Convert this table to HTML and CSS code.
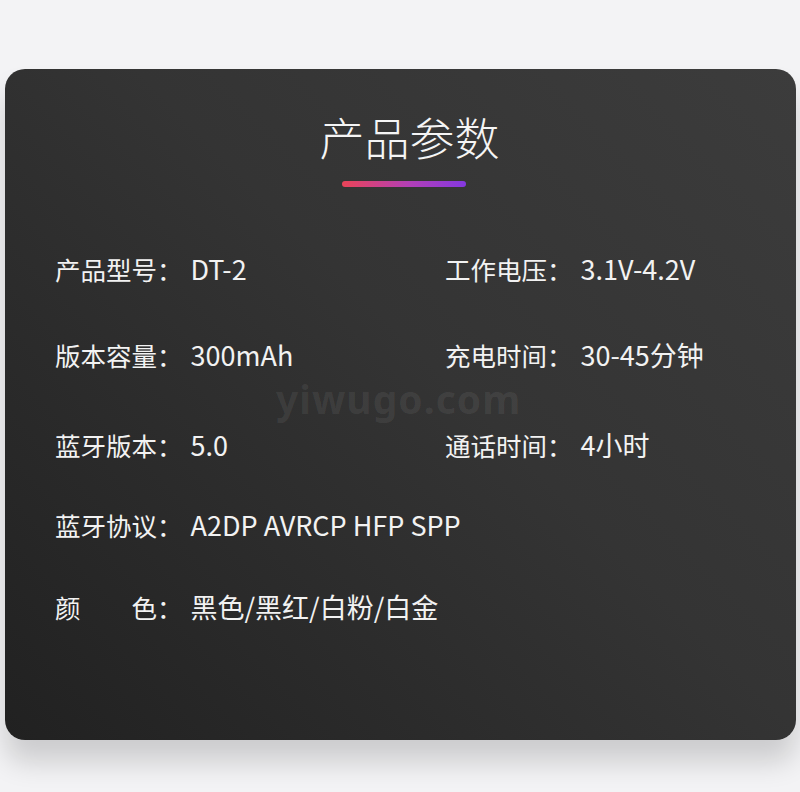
FILE: index.html
```html
<!DOCTYPE html>
<html lang="zh">
<head>
<meta charset="utf-8">
<link rel="stylesheet" href="styles.css">
</head>
<body>
<div class="page">
  <div class="card">
    <h1 class="title">产品参数</h1>
    <div class="bar"></div>
    <div class="specs">
      <div class="spec r1"><span class="label">产品型号：</span><span class="value">DT-2</span></div>
      <div class="spec r1"><span class="label">工作电压：</span><span class="value">3.1V-4.2V</span></div>
      <div class="spec r2"><span class="label">版本容量：</span><span class="value">300mAh</span></div>
      <div class="spec r2"><span class="label">充电时间：</span><span class="value">30-45分钟</span></div>
      <div class="spec r3"><span class="label">蓝牙版本：</span><span class="value">5.0</span></div>
      <div class="spec r3"><span class="label">通话时间：</span><span class="value">4小时</span></div>
      <div class="spec r4 wide"><span class="label">蓝牙协议：</span><span class="value">A2DP AVRCP HFP SPP</span></div>
      <div class="spec r5 wide"><span class="label">颜　　色：</span><span class="value">黑色/黑红/白粉/白金</span></div>
    </div>
    <div class="watermark">yiwugo.com</div>
  </div>
</div>
</body>
</html>
```
FILE: styles.css
```css
html, body {
  margin: 0;
  padding: 0;
  background: #f3f3f5;
}
.page {
  width: 800px;
  height: 792px;
  padding: 69px 4px 0 5px;
  box-sizing: border-box;
  font-family: "Noto Sans CJK SC", "Noto Sans", sans-serif;
}
.card {
  position: relative;
  height: 671px;
  border-radius: 20px;
  background: linear-gradient(45deg, #212121 0%, #343434 55%, #3c3c3c 100%);
  box-shadow: 0 22px 28px rgba(0, 0, 0, 0.16);
  color: #f2f2f2;
  padding-top: 38px;
  box-sizing: border-box;
}
.title {
  margin: 0;
  padding-left: 18px;
  text-align: center;
  font-size: 45px;
  font-weight: 300;
  line-height: 60px;
  color: #f5f5f5;
}
.bar {
  width: 124px;
  height: 6px;
  border-radius: 3px;
  margin: 14px 0 0 337px;
  background: linear-gradient(90deg, #ea4458 0%, #b23fb8 55%, #8438e0 100%);
}
.specs {
  display: grid;
  grid-template-columns: 390px 1fr;
  padding: 64px 0 0 50px;
  row-gap: 50px;
}
.spec {
  display: flex;
  align-items: baseline;
  line-height: 36px;
  white-space: pre;
}
.label {
  font-size: 25.5px;
}
.value {
  font-size: 27px;
  margin-left: 8px;
}
.wide {
  grid-column: 1 / 3;
}
.r3 { margin-top: 4px; }
.r4 { margin-top: -6px; }
.r5 { margin-top: -4px; }
.watermark {
  position: absolute;
  left: 271px;
  top: 303px;
  font-family: "Noto Sans", sans-serif;
  font-size: 39px;
  font-weight: 700;
  color: rgba(255, 255, 255, 0.07);
  letter-spacing: 1px;
}
```
